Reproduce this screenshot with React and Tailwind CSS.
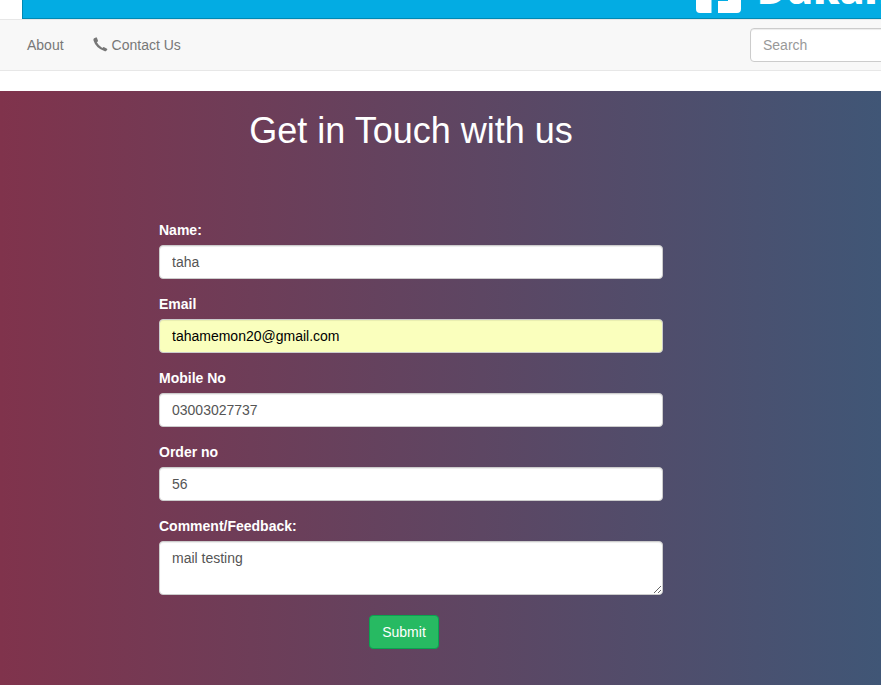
import React from "react";

const control =
  "block rounded-[4px] border border-[#ccc] px-3 py-1.5 text-sm leading-5 outline-none shadow-[inset_0_1px_1px_rgba(0,0,0,0.075)]";

const fields = [
  { label: "Name:", value: "taha", tone: "bg-white text-[#555]" },
  { label: "Email", value: "tahamemon20@gmail.com", tone: "bg-[#faffbd] text-black" },
  { label: "Mobile No", value: "03003027737", tone: "bg-white text-[#555]" },
  { label: "Order no", value: "56", tone: "bg-white text-[#555]" },
];

function Logo() {
  return (
    <div className="ml-[673px] flex h-[18px] items-start">
      <svg width="46" height="18" viewBox="0 0 46 18" className="shrink-0" fill="#fff">
        <path d="M0 0H15.5V13H4Q0 13 0 9Z" />
        <path d="M22 0H45V9Q45 13 41 13H22V1H32V0Z" />
      </svg>
      <span className="-mt-[33px] ml-[15px] font-['Open_Sans',sans-serif] text-[40px] leading-[44px] font-extrabold whitespace-nowrap text-white">
        Dukan
      </span>
    </div>
  );
}

export default function App() {
  return (
    <div className="flex h-[685px] w-[881px] flex-col overflow-hidden bg-white font-['Liberation_Sans',Arial,sans-serif] text-sm leading-5">
      <header className="flex h-[19px] shrink-0 pl-[22px]">
        <div className="h-[19px] w-full overflow-hidden border-b border-l border-[#0089b3] bg-[#03ace3]">
          <Logo />
        </div>
      </header>
      <nav className="flex h-[52px] shrink-0 items-start border-y border-[#e7e7e7] bg-[#f8f8f8] text-[#777]">
        <a className="mt-[15px] ml-[27px]">About</a>
        <a className="mt-[15px] ml-[29px] flex">
          <svg width="15" height="15" viewBox="0 0 15 15" className="mt-[2px] mr-1" fill="#777">
            <path d="M1.2 1.2 2.9.4Q3.6.2 4 .9L5 3.7Q5.1 4.3 4.5 4.7L3.8 5.2Q5.6 8.6 9.3 11L10.2 10.3Q10.7 9.9 11.2 10.2L14 11.7Q14.6 12.1 14.2 12.8L13.1 14Q12.5 14.5 11.4 14.1 2.7 10.8.5 3.4.1 1.8 1.2 1.2Z" />
          </svg>
          Contact Us
        </a>
        <div className="mt-2 ml-auto w-[131px] overflow-hidden">
          <input
            className={`${control} h-[34px] w-[200px] max-w-none bg-white placeholder:text-[#999]`}
            placeholder="Search"
          />
        </div>
      </nav>
      <main className="mt-5 flex-1 bg-linear-to-r/srgb from-[#80334c] to-[#405676]">
        <h1 className="w-[822px] pt-5 text-center text-[36px] leading-[40px] text-white">Get in Touch with us</h1>
        <form className="mt-[69px] ml-[159px] w-[504px]">
          {fields.map((field) => (
            <div key={field.label} className="mb-[15px]">
              <label className="mb-[5px] block font-bold text-white">{field.label}</label>
              <input className={`${control} h-[34px] w-full ${field.tone}`} defaultValue={field.value} />
            </div>
          ))}
          <label className="mb-[5px] block font-bold text-white">Comment/Feedback:</label>
          <textarea className={`${control} h-[54px] w-full resize bg-white text-[#555]`} defaultValue="mail testing" />
          <button
            type="button"
            className="mt-5 ml-[210px] block h-[34px] w-[70px] rounded-[4px] border border-[#0aa350] bg-[#27ba62] text-white"
          >
            Submit
          </button>
        </form>
      </main>
    </div>
  );
}
